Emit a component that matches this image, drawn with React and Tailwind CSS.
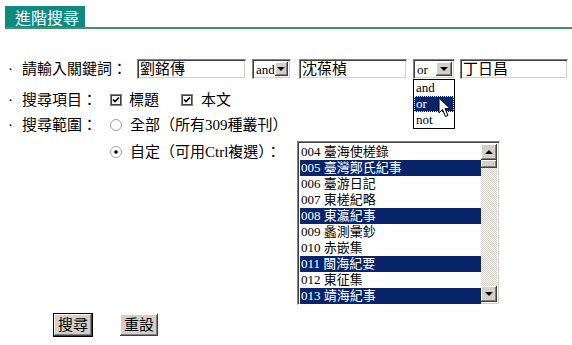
const sunken =
  'border border-t-[#808080] border-l-[#808080] border-r-white border-b-white shadow-[inset_1px_1px_0_#404040,inset_-1px_-1px_0_#d4d0c8]';
const raised =
  'bg-[#d4d0c8] shadow-[inset_-1px_-1px_0_#404040,inset_1px_1px_0_#ffffff,inset_-2px_-2px_0_#808080]';

const books = [
  ['004', '臺海使槎錄', false],
  ['005', '臺灣鄭氏紀事', true],
  ['006', '臺游日記', false],
  ['007', '東槎紀略', false],
  ['008', '東瀛紀事', true],
  ['009', '蠡測彙鈔', false],
  ['010', '赤嵌集', false],
  ['011', '閩海紀要', true],
  ['012', '東征集', false],
  ['013', '靖海紀事', true],
];

function TextBox({ value, width }) {
  return (
    <div className={`${sunken} h-[20px] ${width} bg-white flex items-center pl-[2px] text-[15px] whitespace-nowrap`}>
      {value}
    </div>
  );
}

function DownArrow() {
  return <div className="w-0 h-0 border-x-[4px] border-x-transparent border-t-[4px] border-t-black" />;
}

function UpArrow() {
  return <div className="w-0 h-0 border-x-[4px] border-x-transparent border-b-[4px] border-b-black" />;
}

function Select({ value, width }) {
  return (
    <div className={`${sunken} h-[20px] ${width} bg-white flex items-stretch p-[2px]`}>
      <span className="flex-1 text-[13px] leading-[16px] pl-[1px]">{value}</span>
      <div className={`${raised} w-[16px] flex items-center justify-center`}>
        <DownArrow />
      </div>
    </div>
  );
}

function Checkbox() {
  return (
    <svg width="12" height="12" viewBox="0 0 12 12" className="shrink-0">
      <rect x="0.5" y="0.5" width="11" height="11" fill="#fff" stroke="#808080" />
      <rect x="1.5" y="1.5" width="9" height="9" fill="#fff" stroke="#404040" />
      <path d="M3 5.5 L5 7.5 L9 3.5" fill="none" stroke="#000" strokeWidth="1.6" />
    </svg>
  );
}

function Radio({ checked }) {
  return (
    <svg width="12" height="12" viewBox="0 0 12 12" className="shrink-0">
      <circle cx="6" cy="6" r="5.5" fill="#fff" stroke="#a0a0a0" />
      {checked && <circle cx="6" cy="6" r="1.8" fill="#000" />}
    </svg>
  );
}

function Dot() {
  return <span className="w-[14px] shrink-0">·</span>;
}

export default function App() {
  return (
    <div className="w-[572px] h-[345px] bg-white text-black text-[15px] leading-none overflow-hidden font-['Liberation_Serif','Noto_Sans_CJK_TC',serif]">
      <div className="pt-[6px] pl-[5px]">
        <div className="flex border-b-2 border-[#43906f]">
          <div className="w-[80px] h-[21px] bg-[#0f8a80] text-white text-[16px] pl-[10px] flex items-center font-['Noto_Sans_CJK_TC',sans-serif]">
            進階搜尋
          </div>
        </div>
      </div>

      <div className="mt-[30px] pl-[8px] flex items-center h-[20px]">
        <Dot />
        <span className="w-[115px] shrink-0">請輸入關鍵詞：</span>
        <TextBox value="劉銘傳" width="w-[109px]" />
        <div className="ml-[6px]">
          <Select value="and" width="w-[39px]" />
        </div>
        <div className="ml-[8px]">
          <TextBox value="沈葆楨" width="w-[108px]" />
        </div>
        <div className="ml-[6px] relative">
          <Select value="or" width="w-[42px]" />
          <div className="absolute top-full left-0 w-[42px] bg-white border border-black text-[13px] z-10">
            <div className="h-[16px] leading-[16px] pl-[2px]">and</div>
            <div className="h-[16px] leading-[14px] pl-[1px] bg-[#0a246a] text-white border border-dotted border-[#e8e890]">or</div>
            <div className="h-[16px] leading-[16px] pl-[2px]">not</div>
            <svg width="14" height="22" viewBox="0 0 14 22" className="absolute left-[24px] top-[17px]">
              <path d="M1 1 L1 16 L4.5 12.5 L7.5 19.5 L10 18.5 L7 11.5 L12 11.5 Z" fill="#fff" stroke="#000" strokeWidth="1" strokeLinejoin="miter" />
            </svg>
          </div>
        </div>
        <div className="ml-[5px]">
          <TextBox value="丁日昌" width="w-[108px]" />
        </div>
      </div>

      <div className="mt-[11px] pl-[8px] flex items-center h-[20px]">
        <Dot />
        <span className="w-[88px] shrink-0">搜尋項目：</span>
        <Checkbox />
        <span className="ml-[7px]">標題</span>
        <span className="ml-[22px] flex"><Checkbox /></span>
        <span className="ml-[8px]">本文</span>
      </div>

      <div className="mt-[5px] pl-[8px] flex items-center h-[20px]">
        <Dot />
        <span className="w-[88px] shrink-0">搜尋範圍：</span>
        <Radio />
        <span className="ml-[8px] whitespace-nowrap">全部（所有309種叢刊）</span>
      </div>

      <div className="mt-[6px] pl-[110px] flex items-start">
        <div className="h-[20px] mt-[1px] flex items-center">
          <Radio checked />
          <span className="ml-[8px] w-[167px] whitespace-nowrap">自定（可用Ctrl複選）：</span>
        </div>
        <div className={`${sunken} w-[203px] h-[164px] p-[2px] flex bg-white`}>
          <div className="flex-1 flex flex-col text-[13px]">
            {books.map(([no, title, sel]) => (
              <div
                key={no}
                className={`h-[16px] leading-[16px] pl-[1px] whitespace-nowrap ${sel ? 'bg-[#0a246a] text-white' : ''}`}
              >
                {no} {title}
              </div>
            ))}
          </div>
          <div className="w-[16px] flex flex-col">
            <div className={`${raised} h-[16px] flex items-center justify-center`}>
              <UpArrow />
            </div>
            <div className={`${raised} h-[8px]`} />
            <div className="flex-1 bg-[image:repeating-conic-gradient(#d4d0c8_0_25%,#ffffff_0_50%)] bg-[length:2px_2px]" />
            <div className={`${raised} h-[16px] flex items-center justify-center`}>
              <DownArrow />
            </div>
          </div>
        </div>
      </div>

      <div className="mt-[8px] pl-[53px] flex items-start">
        <div className="border border-black">
          <div className={`${raised} w-[38px] h-[22px] flex items-center justify-center`}>搜尋</div>
        </div>
        <div className={`${raised} ml-[27px] mt-[1px] w-[38px] h-[22px] flex items-center justify-center`}>重設</div>
      </div>
    </div>
  );
}
